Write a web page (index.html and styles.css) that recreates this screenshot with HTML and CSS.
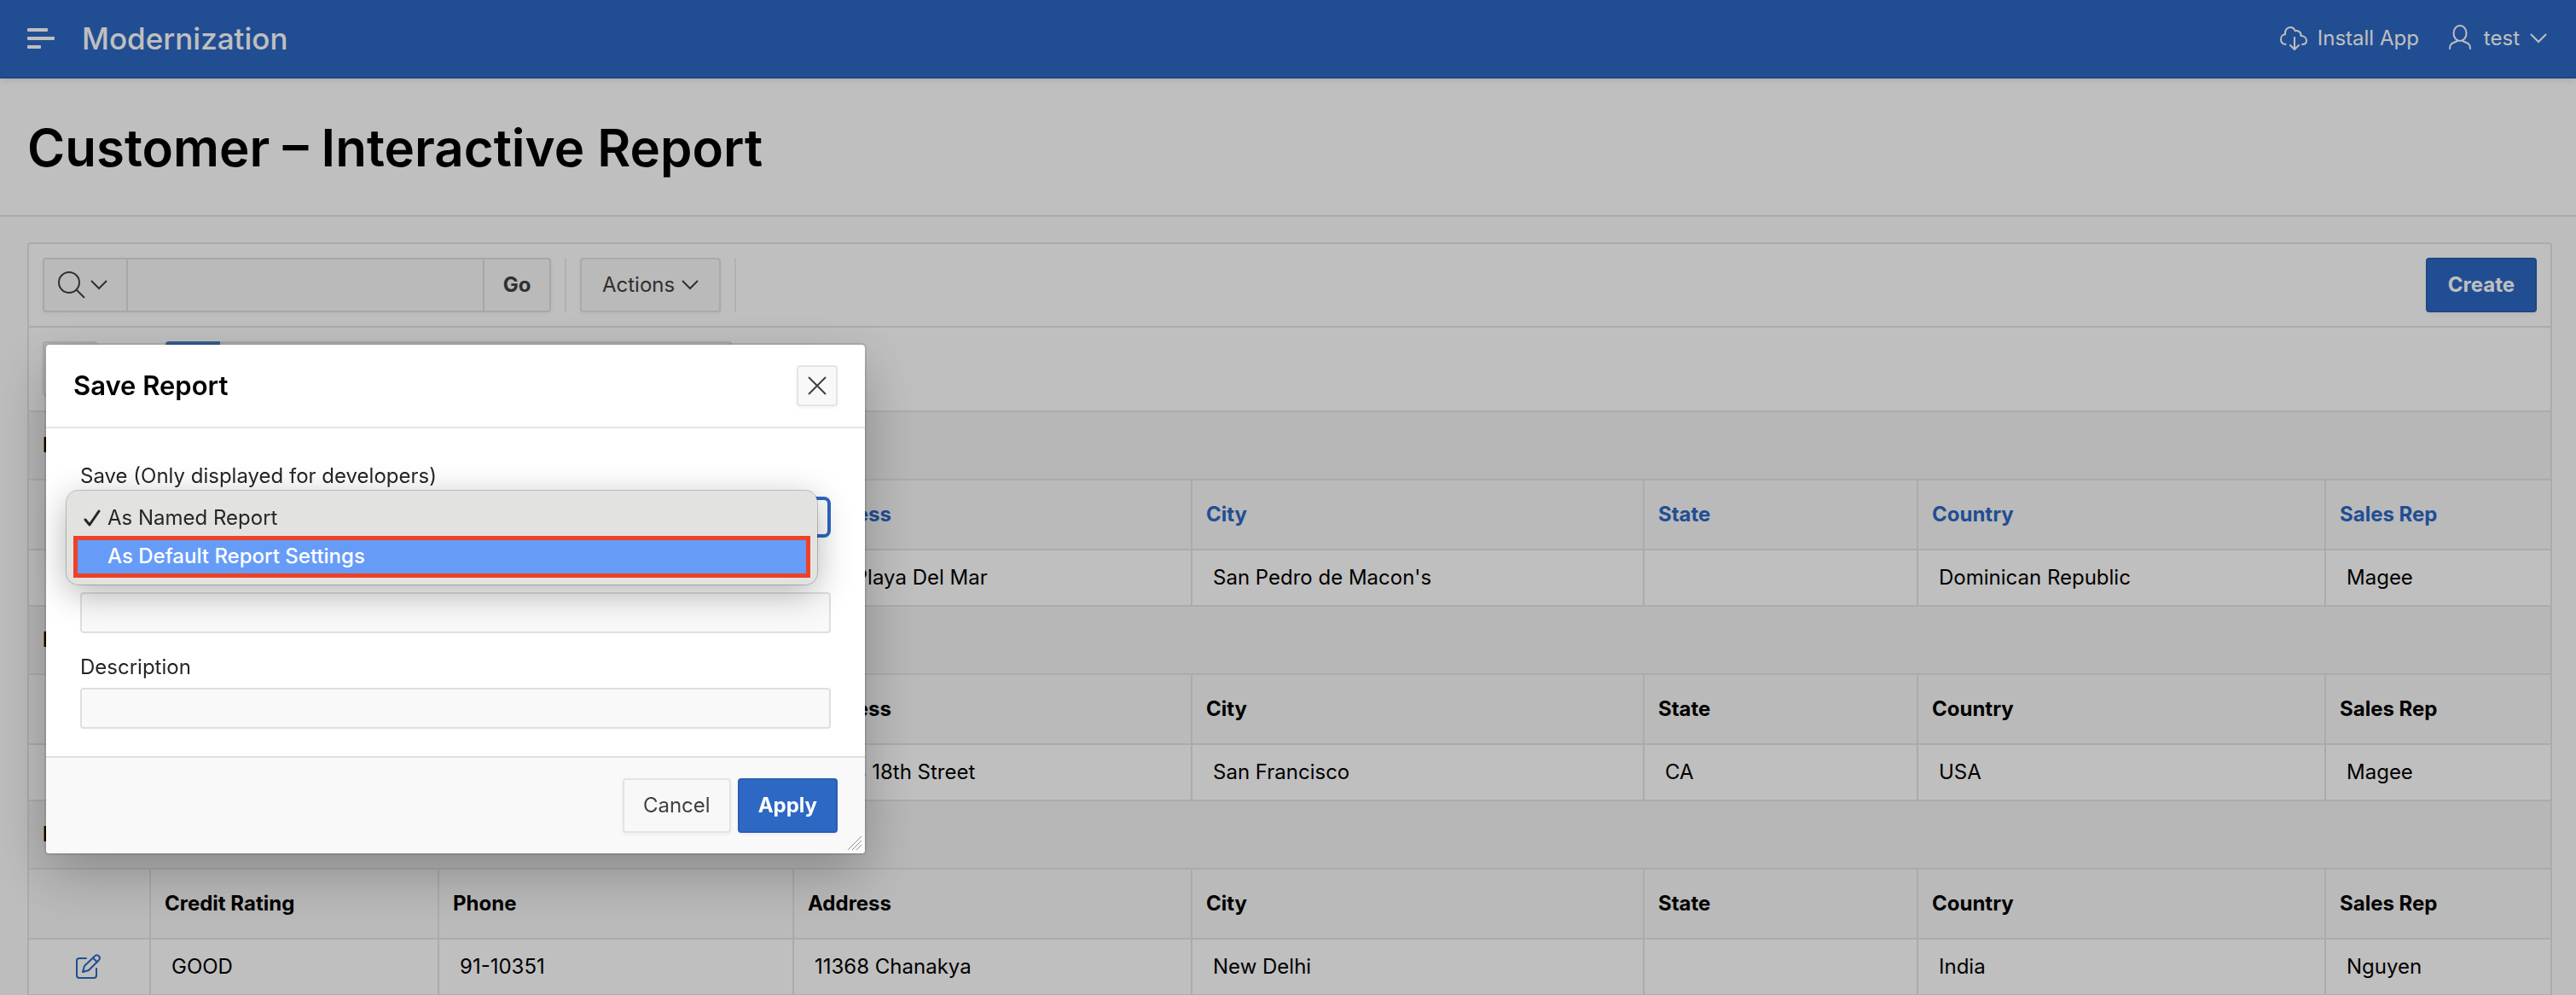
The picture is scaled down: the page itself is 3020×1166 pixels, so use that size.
FILE: index.html
```html
<!DOCTYPE html>
<html lang="en">
<head>
<meta charset="utf-8">
<title>Customer – Interactive Report</title>
<link rel="stylesheet" href="styles.css">
</head>
<body>
<header class="topbar">
  <button class="nav-toggle" type="button" aria-label="Main menu">
    <svg width="32" height="24" viewBox="0 0 32 24" fill="#fff"><rect width="24" height="4" rx="1"/><rect y="10" width="32" height="4" rx="1"/><rect y="20" width="16" height="4" rx="1"/></svg>
  </button>
  <a class="brand" href="#">Modernization</a>
  <nav class="topnav" aria-label="Account">
    <a class="topnav-item" href="#">
      <svg width="32" height="32" viewBox="0 0 32 32" fill="none" stroke="#fff" stroke-width="2" stroke-linecap="round" stroke-linejoin="round"><path d="M6.500 23C3 22.500 1 20 1 17C1 13.500 3.500 11.500 6 11.300C5.500 6 8.500 3 12 3C15 3 16.800 4.500 17.700 7.200C21 6.500 25 8.500 24.500 13C28.500 13 31 15.500 31 18.500C31 21.500 29 23 26 23M17 15V29M12 24L17 29L22 24"/></svg>
      <span>Install App</span>
    </a>
    <a class="topnav-item" href="#">
      <svg width="32" height="32" viewBox="0 0 32 32" fill="none" stroke="#fff" stroke-width="2" stroke-linecap="round"><ellipse cx="16" cy="10" rx="7.500" ry="9"/><path d="M4 28C4 22 7 21.500 13 19V18M28 28C28 22 25 21.500 19 19V18"/></svg>
      <span>test</span>
      <svg width="20" height="12" viewBox="0 0 20 12" fill="none" stroke="#fff" stroke-width="2"><path d="M1 1L10 10L19 1"/></svg>
    </a>
  </nav>
</header>
<div class="title-bar"><h1>Customer – Interactive Report</h1></div>
<main class="report">
  <div class="toolbar">
    <div class="search">
      <button class="search-menu" type="button" aria-label="Select columns to search">
        <svg width="32" height="32" viewBox="0 0 32 32" fill="none" stroke="#404040" stroke-width="2"><circle cx="13" cy="13" r="12"/><path d="M22 22L31 31"/></svg>
        <svg width="20" height="12" viewBox="0 0 20 12" fill="none" stroke="#404040" stroke-width="2"><path d="M1 1L10 10L19 1"/></svg>
      </button>
      <input class="search-field" type="text" aria-label="Search report">
      <button class="search-go" type="button">Go</button>
    </div>
    <span class="separator"></span>
    <button class="btn actions" type="button">Actions
      <svg width="20" height="12" viewBox="0 0 20 12" fill="none" stroke="#404040" stroke-width="2"><path d="M1 1L10 10L19 1"/></svg>
    </button>
    <span class="separator"></span>
    <button class="btn btn-hot create" type="button">Create</button>
  </div>
  <div class="controls">
    <button class="btn collapse" type="button" aria-label="Collapse settings"></button>
    <div class="pill"><span class="pill-icon"></span></div>
  </div>
  <table class="grid">
    <colgroup><col class="c-edit"><col class="c-rating"><col class="c-phone"><col class="c-address"><col class="c-city"><col class="c-state"><col class="c-country"><col class="c-rep"></colgroup>
    <tbody>
      <tr class="break"><th colspan="8">Name</th></tr>
      <tr class="heads"><th></th><th><a href="#">Credit Rating</a></th><th><a href="#">Phone</a></th><th><a href="#">Address</a></th><th><a href="#">City</a></th><th><a href="#">State</a></th><th><a href="#">Country</a></th><th><a href="#">Sales Rep</a></th></tr>
      <tr class="data"><td></td><td></td><td></td><td>100 Playa Del Mar</td><td>San Pedro de Macon's</td><td></td><td>Dominican Republic</td><td>Magee</td></tr>
    </tbody>
    <tbody>
      <tr class="break"><th colspan="8">Name</th></tr>
      <tr class="heads"><th></th><th>Credit Rating</th><th>Phone</th><th>Address</th><th>City</th><th>State</th><th>Country</th><th>Sales Rep</th></tr>
      <tr class="data"><td></td><td></td><td></td><td>2004 18th Street</td><td>San Francisco</td><td>CA</td><td>USA</td><td>Magee</td></tr>
    </tbody>
    <tbody>
      <tr class="break"><th colspan="8">Name</th></tr>
      <tr class="heads"><th></th><th>Credit Rating</th><th>Phone</th><th>Address</th><th>City</th><th>State</th><th>Country</th><th>Sales Rep</th></tr>
      <tr class="data"><td class="edit"><a href="#" aria-label="Edit"><svg width="30" height="30" viewBox="0 0 30 30" fill="none" stroke="#2d68c4" stroke-width="2" stroke-linecap="round" stroke-linejoin="round"><path d="M12 5H4Q1 5 1 8V25Q1 28 4 28H21Q24 28 24 25V17M8 21L10 14L22 2.500Q24.500 0 27 2.500Q29 4.500 27 7L15 19ZM20 4.500L25 9.500"/></svg></a></td><td>GOOD</td><td>91-10351</td><td>11368 Chanakya</td><td>New Delhi</td><td></td><td>India</td><td>Nguyen</td></tr>
    </tbody>
  </table>
</main>
<div class="backdrop"></div>
<form class="dialog" role="dialog" aria-labelledby="dialog-title">
  <div class="dialog-head">
    <h2 id="dialog-title">Save Report</h2>
    <button class="close" type="button" aria-label="Close"><svg width="22" height="22" viewBox="0 0 22 22" stroke="#404040" stroke-width="2"><path d="M1 1L21 21M21 1L1 21"/></svg></button>
  </div>
  <div class="dialog-body">
    <div class="field">
      <label for="save-as">Save (Only displayed for developers)</label>
      <div class="select-wrap">
        <select id="save-as"><option>As Named Report</option><option>As Default Report Settings</option></select>
        <ul class="menu">
          <li class="option"><svg class="check" width="20" height="20" viewBox="0 0 20 20" fill="none" stroke="#262626" stroke-width="3" stroke-linecap="round" stroke-linejoin="round"><path d="M2 12L7 18L18 2"/></svg>As Named Report</li>
          <li class="option active">As Default Report Settings</li>
        </ul>
      </div>
    </div>
    <div class="field unlabelled"><input type="text" aria-label="Name"></div>
    <div class="field"><label for="description">Description</label><input id="description" type="text"></div>
  </div>
  <div class="dialog-foot">
    <button class="btn cancel" type="button">Cancel</button>
    <button class="btn btn-hot apply" type="submit">Apply</button>
  </div>
  <svg class="grip" width="16" height="16" viewBox="0 0 16 16" stroke="#8f8f8f" stroke-width="1"><path d="M0 16L16 0M5 16L16 5M10 16L16 10"/></svg>
</form>
</body>
</html>
```
FILE: styles.css
```css
* { box-sizing: border-box; }
body {
  margin: 0;
  height: 100vh;
  overflow: hidden;
  background: #fdfdfd;
  color: #000;
  font: 24px/32px Inter, "Liberation Sans", sans-serif;
}
h1, h2, ul { margin: 0; padding: 0; }
a { color: inherit; text-decoration: none; }
button, input, select { font: inherit; margin: 0; }
svg { display: block; flex: none; }

.topbar {
  position: relative;
  display: flex;
  align-items: center;
  height: 92px;
  padding: 0 34px 0 32px;
  background: #2d68c4;
  border-bottom: 2px solid #295eb0;
  box-shadow: 0 2px 8px rgba(0, 0, 0, .1);
  color: #fff;
}
.nav-toggle { padding: 0; border: 0; background: none; }
.brand { margin-left: 32px; font-size: 35px; font-weight: 500; }
.topnav { display: flex; gap: 32px; margin-left: auto; }
.topnav-item { display: flex; align-items: center; gap: 12px; }

.title-bar {
  padding: 48px 32px 46px;
  background: #fff;
  border-bottom: 2px solid #e5e5e5;
}
h1 { font-size: 60px; line-height: 66px; font-weight: 600; }

.report {
  margin: 30px 28px 0 32px;
  background: #fff;
  border: 2px solid #e5e5e5;
  border-radius: 4px;
}
.toolbar {
  display: flex;
  gap: 16px;
  padding: 16px;
  border-bottom: 2px solid #e5e5e5;
}
.search {
  display: flex;
  width: 596px;
  height: 64px;
  border: 2px solid #dfdfdf;
  border-radius: 4px;
  background: #f8f8f8;
  box-shadow: 0 2px 4px rgba(0, 0, 0, .04);
}
.search button { border: 0; background: none; color: #404040; }
.search-menu { display: flex; align-items: center; gap: 6px; width: 96px; padding: 0 16px; }
.search-field {
  flex: 1;
  min-width: 0;
  border: 2px solid #dfdfdf;
  border-width: 0 2px;
  background: #f9f9f9;
}
.search-go { width: 76px; padding: 0; font-weight: 700; }
.separator { width: 2px; background: #ececec; }
.btn {
  height: 64px;
  padding: 0 22px;
  border: 2px solid #e3e3e3;
  border-radius: 4px;
  background: #f8f8f8;
  box-shadow: 0 2px 4px rgba(0, 0, 0, .05);
  color: #404040;
}
.btn-hot { border-color: #295eb3; background: #2d68c4; color: #fff; font-weight: 700; }
.actions { display: flex; align-items: center; gap: 8px; padding: 0 24px; }
.create { margin-left: auto; padding: 0 24px; }
.controls {
  display: flex;
  gap: 80px;
  padding: 16px 16px 17px;
  border-bottom: 2px solid #e5e5e5;
}
.collapse { width: 64px; }
.pill {
  width: 664px;
  height: 64px;
  border: 2px solid #dfdfdf;
  border-radius: 4px;
  background: #f8f8f8;
}
.pill-icon { display: block; width: 64px; height: 64px; margin: -2px; background: #4a82c4; border-radius: 4px 0 0 4px; }

.grid { width: 100%; table-layout: fixed; border-collapse: separate; border-spacing: 0; }
.c-edit { width: 143px; }
.c-rating { width: 338px; }
.c-phone { width: 416px; }
.c-address { width: 467px; }
.c-city { width: 530px; }
.c-state { width: 321px; }
.c-country { width: 478px; }
.c-rep { width: 263px; }
.grid th, .grid td {
  padding: 0 16px;
  border: 0 solid #e5e5e5;
  border-width: 0 2px 2px 0;
  text-align: left;
  white-space: nowrap;
}
.grid th { font-weight: 700; }
.grid tr > :last-child { border-right: 0; }
.grid .break th { height: 80px; background: #f4f4f4; }
.grid .heads th { height: 82px; background: #f9f9f9; }
.heads a { color: #2d68c4; }
.grid td { height: 66px; padding: 0 24px; }
.grid .edit { padding: 0 0 0 55px; }

.backdrop { position: fixed; inset: 0; background: rgba(0, 0, 0, .25); }
.dialog {
  position: fixed;
  left: 54px;
  top: 404px;
  width: 960px;
  border-radius: 4px;
  background: #fff;
  box-shadow: 0 0 0 2px rgba(0, 0, 0, .1), 0 24px 64px rgba(0, 0, 0, .25);
}
.dialog-head {
  display: flex;
  align-items: center;
  justify-content: space-between;
  padding: 24px 32px;
  border-bottom: 2px solid #e5e5e5;
}
h2 { font-size: 31px; font-weight: 600; }
.close {
  display: grid;
  place-items: center;
  width: 48px;
  height: 48px;
  padding: 0;
  border: 2px solid #e5e5e5;
  border-radius: 4px;
  background: #f8f8f8;
  box-shadow: 0 2px 4px rgba(0, 0, 0, .05);
}
.dialog-body { display: flex; flex-direction: column; gap: 24px; padding: 40px 40px 32px; }
.field { display: flex; flex-direction: column; gap: 8px; color: #262626; }
.unlabelled { padding-top: 40px; }
.field input, .field select {
  display: block;
  width: 100%;
  height: 48px;
  border: 2px solid #dfdfdf;
  border-radius: 4px;
  background: #f9f9f9;
}
/* The open menu shows the value, so the closed control's own text is hidden. */
.field select {
  appearance: none;
  padding: 0 16px;
  border: 4px solid #2d68c4;
  border-radius: 8px;
  background: #fff;
  color: transparent;
}
.select-wrap { position: relative; }
.menu {
  position: absolute;
  left: -16px;
  right: 16px;
  top: -7px;
  padding: 8px;
  border-radius: 14px;
  background: #e2e2e0;
  box-shadow: 0 0 0 1px rgba(0, 0, 0, .2), 0 10px 40px rgba(0, 0, 0, .3);
  list-style: none;
}
.option { position: relative; height: 45px; padding: 0 40px; line-height: 48px; }
.check { position: absolute; left: 12px; top: 14px; }
.active { height: 49px; border: 5px solid #ee4227; padding: 0 35px; background: #669cf8; color: #fff; line-height: 38px; font-weight: 500; }
.dialog-foot {
  display: flex;
  justify-content: flex-end;
  gap: 8px;
  padding: 24px 32px;
  border-top: 2px solid #e0e0e0;
  border-radius: 0 0 4px 4px;
  background: #f9f9f9;
}
.grip { position: absolute; right: 4px; bottom: 4px; }
```
